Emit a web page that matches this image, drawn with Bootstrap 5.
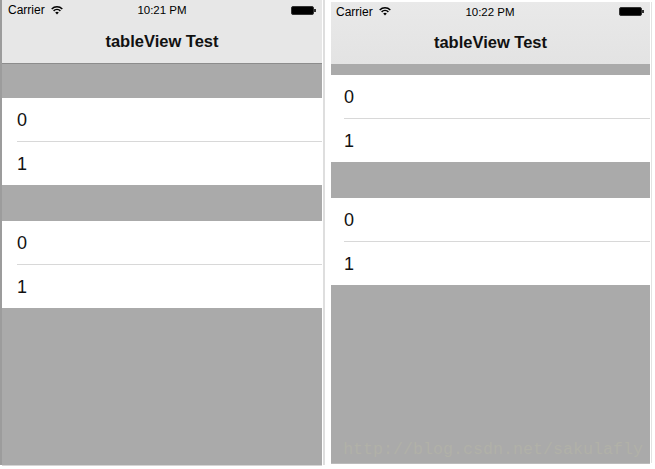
<!DOCTYPE html>
<html lang="en">
<head>
  <meta charset="UTF-8"/>
  <meta name="viewport" content="width=device-width, initial-scale=1.0"/>
  <title>tableView Test</title>
  <link href="https://cdn.jsdelivr.net/npm/bootstrap@5.3.0/dist/css/bootstrap.min.css" rel="stylesheet"/>
  <style>
    html, body { height: 469px; overflow: hidden; background: #fff; }
    body { font-family: "Liberation Sans", Arial, sans-serif; color: #000; }
    .phones { width: 655px; height: 469px; padding-left: 2px; }
    .phone { background: #aaa; position: relative; }
    .phone-a { width: 320px; height: 465px; margin-right: 9px; box-shadow: -2px 0 0 #9c9c9c, 1px 0 0 #fff, 3px 0 0 #dedede, 0 1px 0 #d5d5d5; }
    .phone-b { width: 319px; height: 461px; margin-top: 2px; box-shadow: 0 1px 0 #bbb, 1px 0 0 #fff, 2px 0 0 #e2e2e2; }
    .topbar { background: #e7e7e7; height: 64px; }
    .phone-a .topbar { border-bottom: 1px solid #8c8c8c; }
    .phone-b .topbar { height: 62px; background: linear-gradient(#e9e9e9, #e3e3e3); }
    .status { height: 20px; padding: 0 6px; font-size: 12px; line-height: 18px; }
    .phone-b .status { height: 19px; padding: 0 6px 0 5px; }
    .status-l { width: 100px; gap: 6px; }
    .status-r { width: 100px; }
    .clock { font-size: 11.5px; }
    .title-bar { height: 44px; font-size: 16.5px; font-weight: 700; line-height: 43px; color: #111; }
    .sect-tall { height: 36px; }
    .sect-first { height: 34px; }
    .sect-thin { height: 11px; }
    .cell { height: 43.5px; background: #fff; padding-left: 15px; font-size: 18px; line-height: 45px; position: relative; color: #111; }
    .phone-b .cell { padding-left: 13px; }
    .cell + .cell::before { content: ""; position: absolute; left: 15px; right: 0; top: -1px; height: 1px; background: #d8d8d8; }
    .phone-b .cell + .cell::before { left: 13px; }
    .stamp { position: absolute; right: 7px; bottom: 3px; font-family: "Liberation Mono", monospace; font-size: 16.67px; line-height: 20px; color: #b1b1a8; white-space: nowrap; }
  </style>
</head>
<body>
  <div class="phones d-flex align-items-start">

    <div class="phone phone-a">
      <div class="topbar">
        <div class="status d-flex justify-content-between align-items-center">
          <div class="status-l d-flex align-items-center">Carrier
            <svg width="12" height="9" viewBox="0 0 12 9"><path d="M.7 3a7.6 7.6 0 0 1 10.6 0M2.6 4.9a4.9 4.9 0 0 1 6.8 0" fill="none" stroke="#000" stroke-width="1.5"/><path d="M4.2 6.5a2.6 2.6 0 0 1 3.6 0L6 8.6z" fill="#000"/></svg>
          </div>
          <div class="clock">10:21 PM</div>
          <div class="status-r d-flex justify-content-end">
            <svg width="25" height="9" viewBox="0 0 25 9"><rect x=".5" y=".5" width="22" height="8" rx="1.5" fill="#000" stroke="#333"/><rect x="23" y="3" width="2" height="3" fill="#333"/></svg>
          </div>
        </div>
        <div class="title-bar text-center">tableView Test</div>
      </div>
      <div class="sect-first"></div>
      <div class="cell">0</div>
      <div class="cell">1</div>
      <div class="sect-tall"></div>
      <div class="cell">0</div>
      <div class="cell">1</div>
    </div>

    <div class="phone phone-b">
      <div class="topbar">
        <div class="status d-flex justify-content-between align-items-center">
          <div class="status-l d-flex align-items-center">Carrier
            <svg width="12" height="9" viewBox="0 0 12 9"><path d="M.7 3a7.6 7.6 0 0 1 10.6 0M2.6 4.9a4.9 4.9 0 0 1 6.8 0" fill="none" stroke="#000" stroke-width="1.5"/><path d="M4.2 6.5a2.6 2.6 0 0 1 3.6 0L6 8.6z" fill="#000"/></svg>
          </div>
          <div class="clock">10:22 PM</div>
          <div class="status-r d-flex justify-content-end">
            <svg width="25" height="9" viewBox="0 0 25 9"><rect x=".5" y=".5" width="22" height="8" rx="1.5" fill="#000" stroke="#333"/><rect x="23" y="3" width="2" height="3" fill="#333"/></svg>
          </div>
        </div>
        <div class="title-bar text-center">tableView Test</div>
      </div>
      <div class="sect-thin"></div>
      <div class="cell">0</div>
      <div class="cell">1</div>
      <div class="sect-tall"></div>
      <div class="cell">0</div>
      <div class="cell">1</div>
      <div class="stamp">http://blog.csdn.net/sakulafly</div>
    </div>

  </div>
  <script src="https://cdn.jsdelivr.net/npm/bootstrap@5.3.0/dist/js/bootstrap.bundle.min.js"></script>
</body>
</html>
